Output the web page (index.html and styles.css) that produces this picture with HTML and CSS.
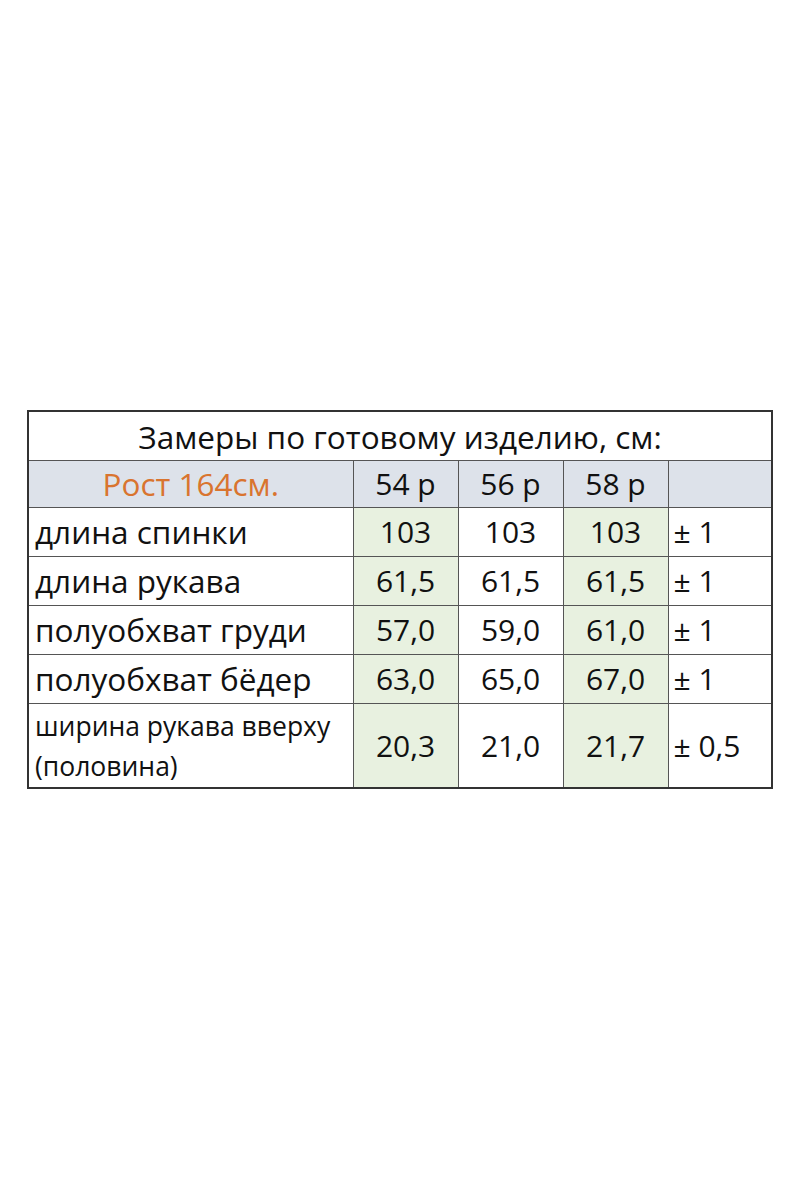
FILE: index.html
```html
<!DOCTYPE html>
<html lang="ru">
<head>
<meta charset="utf-8">
<link rel="stylesheet" href="styles.css">
</head>
<body>
<div class="page">
  <table class="sizes">
    <colgroup>
      <col class="c-name"><col class="c-val"><col class="c-val"><col class="c-val"><col class="c-tol">
    </colgroup>
    <tr class="title-row"><td colspan="5" class="title">Замеры по готовому изделию, см:</td></tr>
    <tr class="head-row">
      <td class="height">Рост 164см.</td>
      <td class="num">54 р</td>
      <td class="num">56 р</td>
      <td class="num">58 р</td>
      <td></td>
    </tr>
    <tr class="row">
      <td class="name">длина спинки</td>
      <td class="num green">103</td>
      <td class="num">103</td>
      <td class="num green">103</td>
      <td class="tol">± 1</td>
    </tr>
    <tr class="row">
      <td class="name">длина рукава</td>
      <td class="num green">61,5</td>
      <td class="num">61,5</td>
      <td class="num green">61,5</td>
      <td class="tol">± 1</td>
    </tr>
    <tr class="row">
      <td class="name">полуобхват груди</td>
      <td class="num green">57,0</td>
      <td class="num">59,0</td>
      <td class="num green">61,0</td>
      <td class="tol">± 1</td>
    </tr>
    <tr class="row">
      <td class="name">полуобхват бёдер</td>
      <td class="num green">63,0</td>
      <td class="num">65,0</td>
      <td class="num green">67,0</td>
      <td class="tol">± 1</td>
    </tr>
    <tr class="row tall">
      <td class="name small">ширина рукава вверху<br>(половина)</td>
      <td class="num green">20,3</td>
      <td class="num">21,0</td>
      <td class="num green">21,7</td>
      <td class="tol">± 0,5</td>
    </tr>
  </table>
</div>
</body>
</html>
```

FILE: styles.css
```css
html, body {
  margin: 0;
  padding: 0;
  background: #ffffff;
}
.page {
  padding: 410px 0 0 27px;
  font-family: "Open Sans", "Liberation Sans", sans-serif;
  color: #111;
}
.sizes {
  border-collapse: collapse;
  width: 744px;
  table-layout: fixed;
  border: 2px solid #333;
}
.c-name { width: 325px; }
.c-val { width: 105px; }
.c-tol { width: 104px; }
.sizes td {
  border: 1px solid #555;
  padding: 0;
  font-size: 30px;
  line-height: 1;
  vertical-align: middle;
}
.title-row td { height: 47px; }
.title {
  text-align: center;
  font-size: 31.5px !important;
  padding-top: 1px !important;
}
.head-row td {
  height: 46px;
  background: #dde2ea;
}
.height {
  color: #d9742f;
  text-align: center;
  font-size: 31.5px !important;
}
.row td { height: 48px; }
.row.tall td { height: 83px; }
.num { text-align: center; }
.green { background: #e8f1e0; }
.name {
  padding-left: 6px !important;
  text-align: left;
  font-size: 31.5px !important;
}
.name.small {
  font-size: 26.5px !important;
  line-height: 40px !important;
}
.tol {
  text-align: left;
  padding-left: 5px !important;
}
```
